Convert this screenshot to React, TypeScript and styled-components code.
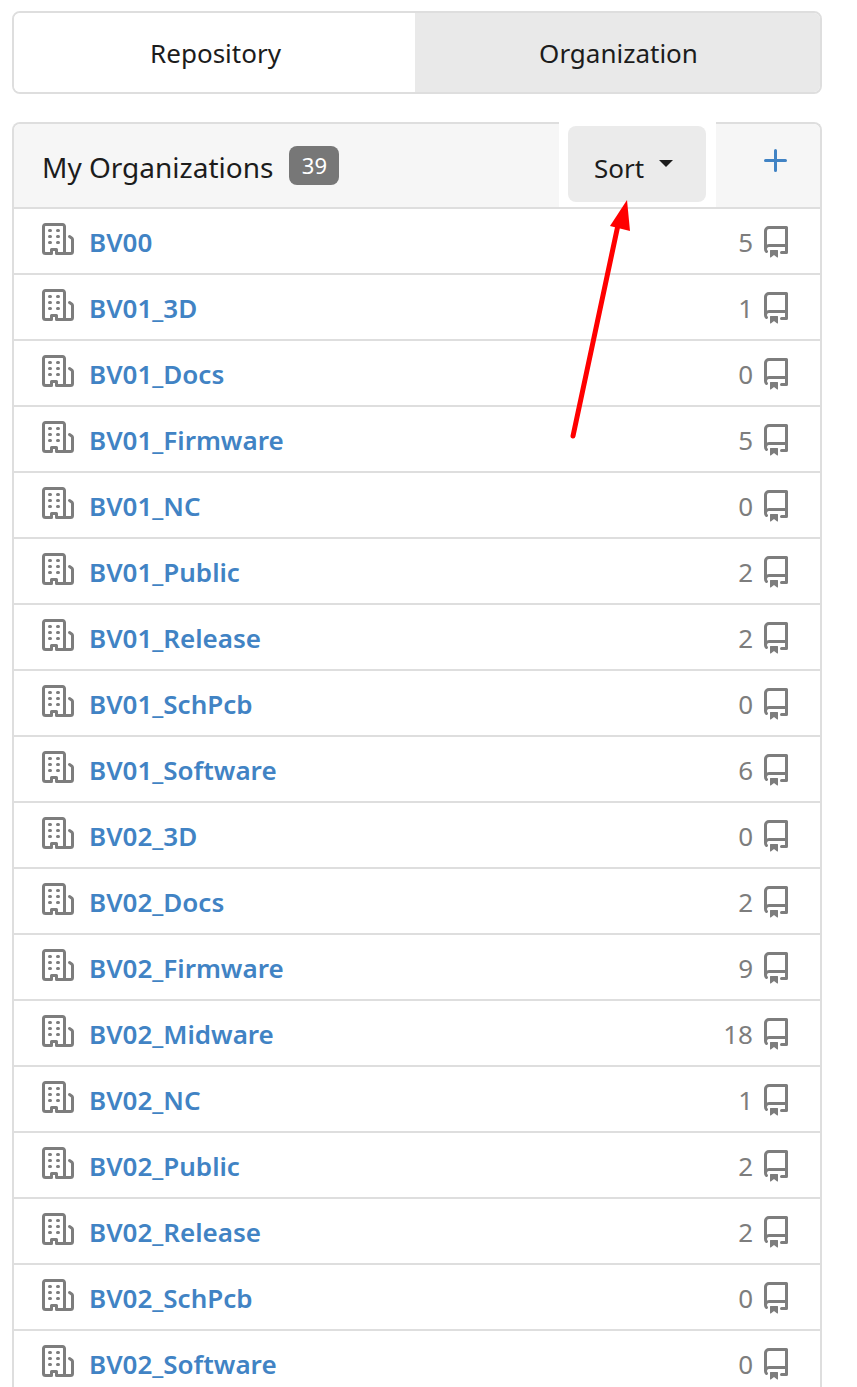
import React from "react";
import styled, { createGlobalStyle } from "styled-components";

const Global = createGlobalStyle`
  html, body { margin: 0; padding: 0; background: #fff; overflow: hidden; }
  #root { height: 1387px; overflow: hidden; }
`;

const Page = styled.div`
  position: relative;
  box-sizing: border-box;
  height: 1387px;
  padding: 11px 35px 0 12px;
  font-family: "Noto Sans", "Open Sans", sans-serif;
  color: #1c1c1c;
`;

const Tabs = styled.div`
  display: flex;
  height: 83px;
  box-sizing: border-box;
  border: 2px solid #dedede;
  border-radius: 8px;
  overflow: hidden;
`;

const Tab = styled.div<{ $active?: boolean }>`
  display: flex;
  align-items: center;
  justify-content: center;
  box-sizing: border-box;
  flex: ${(p) => (p.$active ? "0 0 401px" : "1")};
  padding: 1px 0 0 2px;
  font-size: 26px;
  background: ${(p) => (p.$active ? "#fff" : "#e9e9e9")};
`;

const Panel = styled.div`
  margin-top: 28px;
  border: 2px solid #dedede;
  border-bottom: 0;
  border-radius: 8px 8px 0 0;
`;

const Header = styled.div`
  display: flex;
  align-items: stretch;
  height: 83px;
  background: #f6f6f6;
  border-radius: 6px 6px 0 0;
  border-bottom: 2px solid #dedede;
`;

const Title = styled.div`
  display: flex;
  align-items: center;
  flex: 1;
  gap: 16px;
  padding: 2px 0 0 28px;
  font-size: 28px;
`;

const Badge = styled.span`
  display: inline-flex;
  align-items: center;
  justify-content: center;
  width: 50px;
  height: 39px;
  margin-bottom: 3px;
  border-radius: 8px;
  background: #777;
  color: #fff;
  font-size: 22px;
`;

const SortSlot = styled.div`
  width: 157px;
  margin-top: -2px;
  padding: 4px 10px 5px 9px;
  box-sizing: border-box;
  background: #fff;
  display: flex;
`;

const SortButton = styled.div`
  flex: 1;
  display: flex;
  align-items: center;
  justify-content: center;
  gap: 15px;
  padding: 8px 7px 0 0;
  background: #ebebeb;
  border-radius: 8px;
  font-size: 26px;
`;

const Caret = styled.span`
  width: 0;
  height: 0;
  margin-bottom: 10px;
  border-left: 7px solid transparent;
  border-right: 7px solid transparent;
  border-top: 7px solid #1c1c1c;
`;

const AddSlot = styled.div`
  flex: 0 0 104px;
  display: flex;
  align-items: center;
  justify-content: center;
  color: #4183c4;
  padding: 0 0 9px 15px;
  box-sizing: border-box;
`;

const Icon = styled.svg`
  flex: none;
  width: 32px;
  height: 32px;
  fill: currentColor;
`;

const OrgIcon = styled(Icon)`
  color: #7d7d7d;
  margin-top: -4px;
`;

const RepoIcon = styled(Icon)`
  color: #7d7d7d;
  margin-left: 7px;
  margin-top: 2px;
`;

const Row = styled.div`
  display: flex;
  align-items: center;
  height: 64px;
  padding: 0 28px;
  border-bottom: 2px solid #dedede;
`;

const Name = styled.a`
  flex: 1;
  margin: 2px 0 0 15px;
  color: #4183c4;
  font-size: 26px;
  font-weight: 600;
  text-decoration: none;
`;

const Count = styled.span`
  margin-top: 2px;
  color: #7d7d7d;
  font-size: 26px;
`;

const Arrow = styled.svg`
  position: absolute;
  left: 0;
  top: 0;
  pointer-events: none;
`;

const ORG =
  "M1.75 16A1.75 1.75 0 0 1 0 14.25V1.75C0 .784.784 0 1.75 0h8.5C11.216 0 12 .784 12 1.75v12.5c0 .085-.006.168-.018.25h2.268a.25.25 0 0 0 .25-.25V8.285a.25.25 0 0 0-.111-.208l-1.055-.703a.749.749 0 1 1 .832-1.248l1.055.703c.487.325.779.871.779 1.456v5.965A1.75 1.75 0 0 1 14.25 16h-3.5a.766.766 0 0 1-.197-.026c-.099.017-.2.026-.303.026h-3a.75.75 0 0 1-.75-.75V14h-1v1.25a.75.75 0 0 1-.75.75Zm-.25-1.75c0 .138.112.25.25.25H4v-1.25a.75.75 0 0 1 .75-.75h2.5a.75.75 0 0 1 .75.75v1.25h2.25a.25.25 0 0 0 .25-.25V1.75a.25.25 0 0 0-.25-.25h-8.5a.25.25 0 0 0-.25.25ZM3.75 6h.5a.75.75 0 0 1 0 1.5h-.5a.75.75 0 0 1 0-1.5ZM3 3.75A.75.75 0 0 1 3.75 3h.5a.75.75 0 0 1 0 1.5h-.5A.75.75 0 0 1 3 3.75Zm4 3A.75.75 0 0 1 7.75 6h.5a.75.75 0 0 1 0 1.5h-.5A.75.75 0 0 1 7 6.75ZM7.75 3h.5a.75.75 0 0 1 0 1.5h-.5a.75.75 0 0 1 0-1.5ZM3 9.75A.75.75 0 0 1 3.75 9h.5a.75.75 0 0 1 0 1.5h-.5A.75.75 0 0 1 3 9.75ZM7.75 9h.5a.75.75 0 0 1 0 1.5h-.5a.75.75 0 0 1 0-1.5Z";
const REPO =
  "M2 2.5A2.5 2.5 0 0 1 4.5 0h8.75a.75.75 0 0 1 .75.75v12.5a.75.75 0 0 1-.75.75h-2.5a.75.75 0 0 1 0-1.5h1.75v-2h-8a1 1 0 0 0-.714 1.7.75.75 0 1 1-1.072 1.05A2.495 2.495 0 0 1 2 11.5Zm10.5-1h-8a1 1 0 0 0-1 1v6.708A2.486 2.486 0 0 1 4.5 9h8ZM5 12.25a.25.25 0 0 1 .25-.25h3.5a.25.25 0 0 1 .25.25v3.25a.25.25 0 0 1-.4.2l-1.45-1.087a.249.249 0 0 0-.3 0L5.4 15.7a.25.25 0 0 1-.4-.2Z";
const PLUS =
  "M7.75 2a.75.75 0 0 1 .75.75V7h4.25a.75.75 0 0 1 0 1.5H8.5v4.25a.75.75 0 0 1-1.5 0V8.5H2.75a.75.75 0 0 1 0-1.5H7V2.75A.75.75 0 0 1 7.75 2Z";

const rows: [string, number][] = [
  ["BV00", 5], ["BV01_3D", 1], ["BV01_Docs", 0], ["BV01_Firmware", 5],
  ["BV01_NC", 0], ["BV01_Public", 2], ["BV01_Release", 2], ["BV01_SchPcb", 0],
  ["BV01_Software", 6], ["BV02_3D", 0], ["BV02_Docs", 2], ["BV02_Firmware", 9],
  ["BV02_Midware", 18], ["BV02_NC", 1], ["BV02_Public", 2], ["BV02_Release", 2],
  ["BV02_SchPcb", 0], ["BV02_Software", 0],
];

export default function App() {
  return (
    <Page>
      <Global />
      <Tabs>
        <Tab $active>Repository</Tab>
        <Tab>Organization</Tab>
      </Tabs>
      <Panel>
        <Header>
          <Title>
            My Organizations <Badge>39</Badge>
          </Title>
          <SortSlot>
            <SortButton>
              Sort <Caret />
            </SortButton>
          </SortSlot>
          <AddSlot>
            <Icon viewBox="0 0 16 16"><path d={PLUS} /></Icon>
          </AddSlot>
        </Header>
        {rows.map(([name, count]) => (
          <Row key={name}>
            <OrgIcon viewBox="0 0 16 16"><path d={ORG} /></OrgIcon>
            <Name>{name}</Name>
            <Count>{count}</Count>
            <RepoIcon viewBox="0 0 16 16"><path d={REPO} /></RepoIcon>
          </Row>
        ))}
      </Panel>
      <Arrow width="857" height="1387" viewBox="0 0 857 1387">
        <line x1="573" y1="436" x2="618" y2="225" stroke="#ff0000" strokeWidth="5" strokeLinecap="round" />
        <polygon points="627,200 610,226 630,231" fill="#ff0000" />
      </Arrow>
    </Page>
  );
}
